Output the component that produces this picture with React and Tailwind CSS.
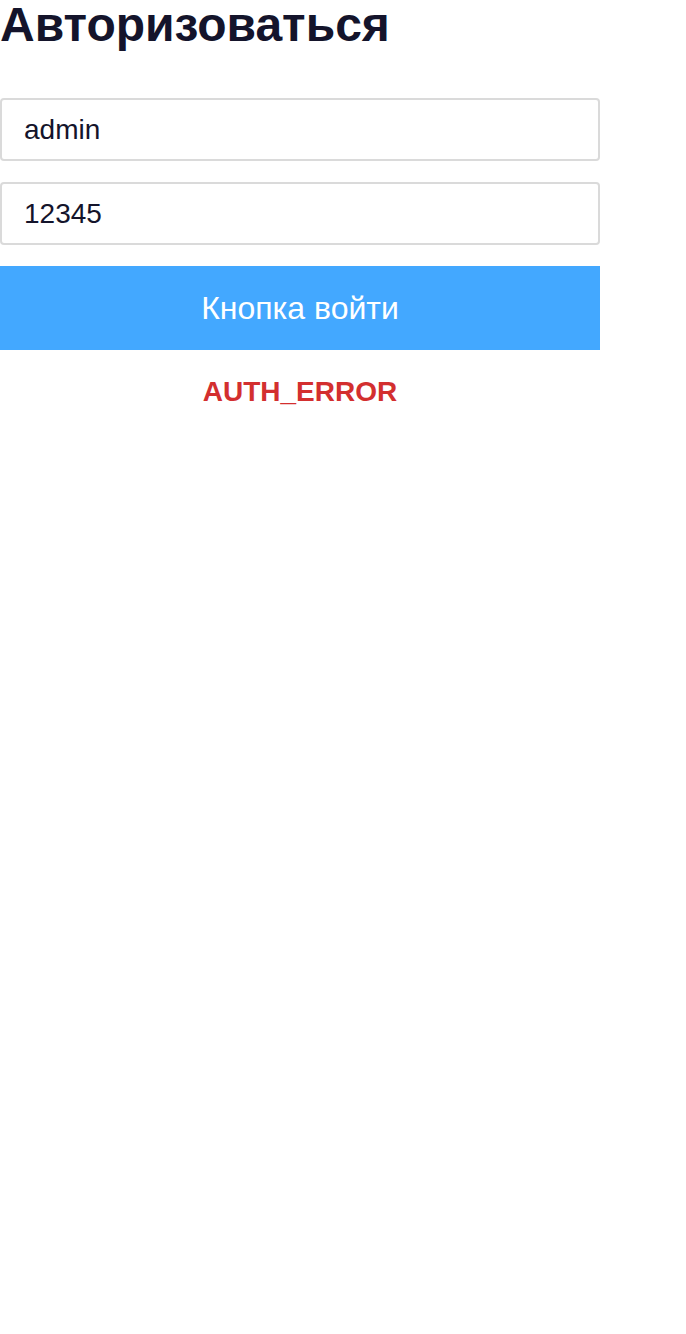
import React, { useState } from 'react'

export default function App() {
    const [login, setLogin] = useState('admin')
    const [password, setPassword] = useState('12345')

    return (
        <div className="w-[600px] font-['Liberation_Sans',Arial,sans-serif] text-[#14142b]">
            <h1 className="text-[48px] font-bold leading-[50px] m-0">Авторизоваться</h1>
            <div className="mt-[48px] flex flex-col gap-[21px]">
                <input
                    className="h-[63px] w-full border-2 border-[#dadada] rounded-[4px] px-[22px] text-[28px] text-[#14142b] outline-none"
                    value={login}
                    onChange={e => setLogin(e.target.value)}
                />
                <input
                    className="h-[63px] w-full border-2 border-[#dadada] rounded-[4px] px-[22px] text-[28px] text-[#14142b] outline-none"
                    value={password}
                    onChange={e => setPassword(e.target.value)}
                />
                <button className="h-[84px] w-full bg-[#43a8ff] text-white text-[32px]">
                    Кнопка войти
                </button>
            </div>
            <p className="mt-[21px] text-center text-[28px] leading-[42px] font-bold text-[#d32f2f]">AUTH_ERROR</p>
        </div>
    )
}
